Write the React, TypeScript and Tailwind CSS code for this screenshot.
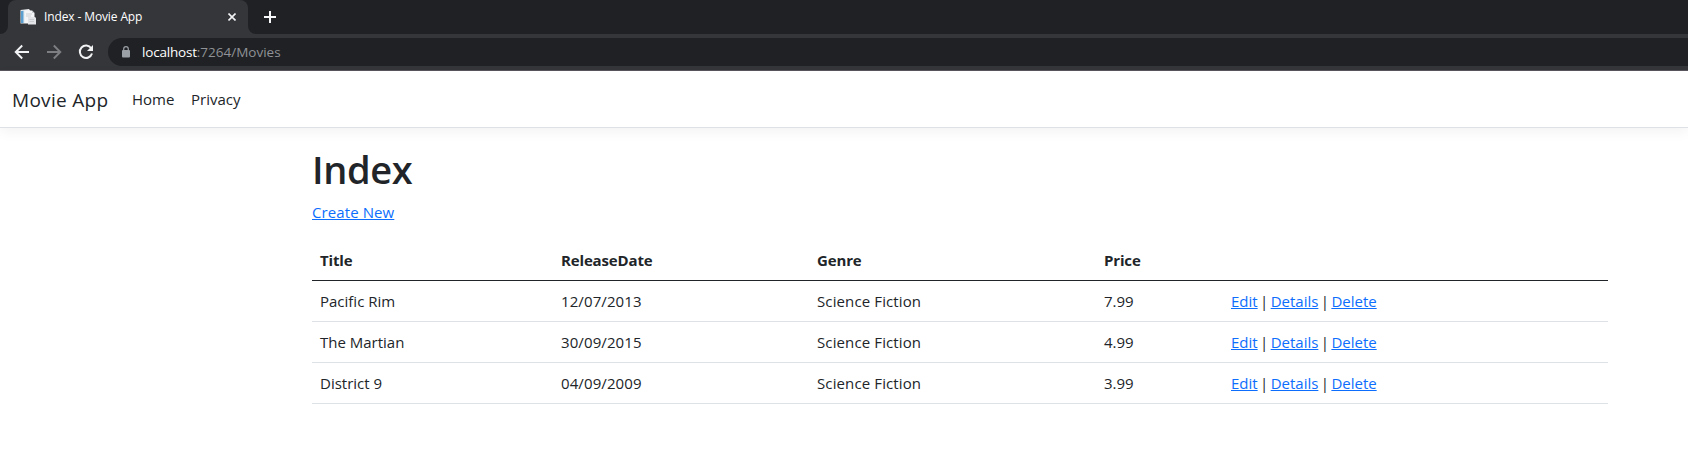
import React from "react";

const movies = [
  { title: "Pacific Rim", date: "12/07/2013", genre: "Science Fiction", price: "7.99" },
  { title: "The Martian", date: "30/09/2015", genre: "Science Fiction", price: "4.99" },
  { title: "District 9", date: "04/09/2009", genre: "Science Fiction", price: "3.99" },
];

function Favicon() {
  return (
    <svg width="16" height="16" viewBox="0 0 16 16">
      <path d="M0.5 1 L9 0 L10.5 2 V14.500 H0.500 Z" fill="#e9edf0" />
      <path d="M1 2 L3.5 1.7 V14 H1 Z" fill="#5b9fd0" />
      <path d="M5 1.5 H12 L14.5 4 V14 H5 Z" fill="#f4f5f6" />
      <path d="M12 1.5 V4 H14.5 Z" fill="#c5c9cd" />
      <path d="M8 8 H15 L16 9 V15.5 H8 Z" fill="#e2e4e7" />
      <path d="M6 5 H12 M6 7 H11 M9.500 10.500 H14 M9.500 12.500 H14" stroke="#c3c7cb" strokeWidth="0.8" />
    </svg>
  );
}

function Browser() {
  return (
    <div className="h-[71px] border-b border-[#5a565e] bg-[#35363a]">
      <div className="flex h-[34px] bg-[#202124]">
        <div className="flex w-2 items-end bg-[#35363a]">
          <div className="h-full w-2 rounded-br-lg bg-[#202124]" />
        </div>
        <div className="flex w-[240px] items-center rounded-t-lg bg-[#35363a] pl-3">
          <Favicon />
          <span className="ml-2 w-[184px] whitespace-nowrap text-[12px] tracking-[-0.12px] text-white">
            Index - Movie App
          </span>
          <svg width="8" height="8" viewBox="0 0 8 8" stroke="#f1f3f4" strokeWidth="1.6">
            <path d="M0.500 0.500 L7.500 7.500 M7.500 0.500 L0.500 7.500" />
          </svg>
        </div>
        <div className="w-2 bg-[#35363a]">
          <div className="h-full w-2 rounded-bl-lg bg-[#202124]" />
        </div>
        <svg className="ml-2 mt-[11px]" width="12" height="12" viewBox="0 0 12 12" stroke="#f8f9fa" strokeWidth="2">
          <path d="M6 0 V12 M0 6 H12" />
        </svg>
      </div>
      <div className="flex h-9 items-center">
        <svg className="ml-[14px]" width="16" height="16" viewBox="0 0 16 16" fill="none" stroke="#f1f3f4" strokeWidth="1.9">
          <path d="M15 8 H2.200 M8.200 1.500 L1.700 8 L8.200 14.500" />
        </svg>
        <svg className="ml-4" width="16" height="16" viewBox="0 0 16 16" fill="none" stroke="#7d7e81" strokeWidth="1.9">
          <path d="M1 8 H13.800 M7.800 1.500 L14.300 8 L7.800 14.500" />
        </svg>
        <svg className="ml-4" width="16" height="16" viewBox="0 0 16 16">
          <path
            d="M13.200 4.200 A6.200 6.200 0 1 0 14 9.500"
            fill="none"
            stroke="#f1f3f4"
            strokeWidth="2"
          />
          <path d="M15 1 V7 H9 Z" fill="#f1f3f4" />
        </svg>
        <div className="ml-[14px] flex h-7 flex-1 items-center rounded-l-full bg-[#202124] pl-[14px]">
          <svg width="8" height="12" viewBox="0 0 8 12">
            <path d="M1.700 5 V3 A2.300 2.300 0 0 1 6.300 3 V5" fill="none" stroke="#9aa0a6" strokeWidth="1.2" />
            <rect x="0" y="4" width="8" height="7.500" rx="1" fill="#9aa0a6" />
          </svg>
          <span className="ml-3 text-[13.5px] tracking-[-0.2px] text-white">localhost</span>
          <span className="text-[13.5px] text-[#8f9296]">:7264/Movies</span>
        </div>
      </div>
    </div>
  );
}

function Link({ children }: { children: string }) {
  return (
    <a href="#" className="text-[#0d6efd] underline decoration-1 underline-offset-1">
      {children}
    </a>
  );
}

function Separator() {
  return <span className="inline-block w-[13px] text-center tracking-normal">|</span>;
}

export default function App() {
  return (
    <div className="h-[475px] overflow-hidden bg-white font-['Open_Sans','Noto_Sans',sans-serif] text-[15px] leading-6 text-[#212529]">
      <Browser />
      <nav className="flex h-[57px] items-center border-b border-[#dee2e6] pl-3 shadow-[0_4px_12px_rgba(0,0,0,0.05)]">
        <span className="w-[120px] whitespace-nowrap pt-px text-[19px] tracking-[0.3px]">Movie App</span>
        <span className="w-[59px]">Home</span>
        <span>Privacy</span>
      </nav>
      <main className="ml-[312px] w-[1296px] pt-[17px]">
        <h1 className="mb-[7px] text-[38px] font-semibold leading-[48px] tracking-[-0.4px]">Index</h1>
        <p className="mb-4 tracking-[0.1px]">
          <Link>Create New</Link>
        </p>
        <table className="w-full table-fixed border-collapse text-left">
          <colgroup>
            <col className="w-[241px]" />
            <col className="w-[256px]" />
            <col className="w-[287px]" />
            <col className="w-[127px]" />
            <col />
          </colgroup>
          <thead>
            <tr className="h-10 border-b border-[#212529] tracking-[-0.15px]">
              <th className="px-2 font-bold">Title</th>
              <th className="px-2 font-bold">ReleaseDate</th>
              <th className="px-2 font-bold">Genre</th>
              <th className="px-2 font-bold">Price</th>
              <th />
            </tr>
          </thead>
          <tbody>
            {movies.map((m) => (
              <tr key={m.title} className="h-[41px] border-b border-[#dee2e6]">
                <td className="px-2">{m.title}</td>
                <td className="px-2 tracking-[0.1px]">{m.date}</td>
                <td className="px-2 tracking-[0.12px]">{m.genre}</td>
                <td className="px-2">{m.price}</td>
                <td className="px-2">
                  <Link>Edit</Link>
                  <Separator />
                  <Link>Details</Link>
                  <Separator />
                  <Link>Delete</Link>
                </td>
              </tr>
            ))}
          </tbody>
        </table>
      </main>
    </div>
  );
}
